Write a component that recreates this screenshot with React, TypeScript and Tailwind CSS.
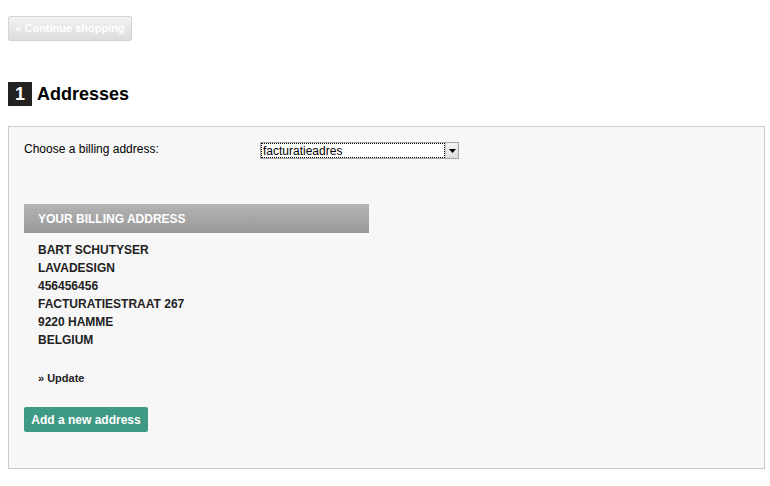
import React from "react";

const lines = [
  "BART SCHUTYSER",
  "LAVADESIGN",
  "456456456",
  "FACTURATIESTRAAT 267",
  "9220 HAMME",
  "BELGIUM",
];

export default function App() {
  return (
    <div className="min-h-[486px] w-[770px] bg-white px-2 pt-4 font-['Liberation_Sans',Arial,sans-serif] text-[#222]">
      <button className="flex h-[25px] w-[124px] items-center justify-center rounded-[2px] border border-[#d4d4d4] bg-gradient-to-b from-[#f2f2f2] to-[#dcdcdc] text-[11px] font-bold text-white">
        « Continue shopping
      </button>

      <div className="mt-[41px] flex items-center gap-[5px]">
        <span className="flex h-6 w-6 items-center justify-center bg-[#222] text-[18px] font-bold leading-none text-white">
          1
        </span>
        <h2 className="text-[18px] font-bold leading-none text-black">Addresses</h2>
      </div>

      <div className="mt-[20px] h-[343px] w-[757px] border border-[#cccccc] bg-[#f7f7f7] px-[15px] pt-[15px]">
        <div className="flex items-start">
          <label className="w-[236px] text-[12px] leading-[15px] text-black">
            Choose a billing address:
          </label>
          <div className="flex h-[17px] w-[199px] items-stretch border border-[#a5a5a5] bg-white">
            <div className="flex flex-1 items-center border border-dotted border-black pl-[1px] text-[12px] leading-none text-black">
              facturatieadres
            </div>
            <div className="flex w-[13px] items-center justify-center border-l border-[#c8c8c8] bg-gradient-to-b from-[#f4f4f4] to-[#dedede]">
              <svg width="7" height="4" viewBox="0 0 7 4">
                <path d="M0 0h7L3.5 4z" fill="#000" />
              </svg>
            </div>
          </div>
        </div>

        <div className="mt-[45px] flex h-[29px] w-[345px] items-center bg-gradient-to-b from-[#b4b4b4] to-[#999999] pl-[14px] text-[12px] font-bold text-white">
          YOUR BILLING ADDRESS
        </div>

        <div className="mt-[8px] pl-[14px] text-[12px] font-bold leading-[18px] text-[#222]">
          {lines.map((l) => (
            <div key={l}>{l}</div>
          ))}
        </div>

        <div className="mt-[22px] pl-[14px] text-[11px] font-bold leading-[15px] text-[#222]">
          » Update
        </div>

        <button className="mt-[21px] flex h-[25px] w-[124px] items-center justify-center rounded-[2px] bg-[#3f9a85] text-[12px] font-bold text-white">
          Add a new address
        </button>
      </div>
    </div>
  );
}
